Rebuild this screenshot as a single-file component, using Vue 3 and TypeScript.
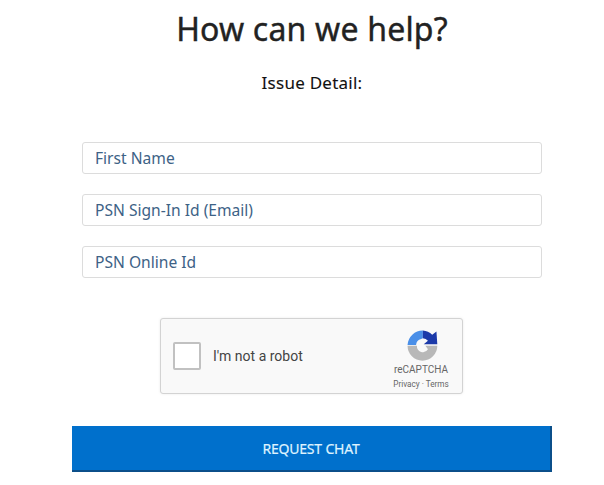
<script setup lang="ts">
const fields: string[] = ['First Name', 'PSN Sign-In Id (Email)', 'PSN Online Id']
</script>

<template>
  <main class="page">
    <h1 class="title">How can we help?</h1>
    <p class="subtitle">Issue Detail:</p>
    <form class="form" @submit.prevent>
      <div v-for="field in fields" :key="field" class="field">{{ field }}</div>
      <div class="captcha">
        <span class="check"></span>
        <span class="robot">I'm not a robot</span>
        <div class="brand">
          <svg class="logo" viewBox="0 0 40 40" width="34" height="34" aria-hidden="true">
            <path d="M21 3 A18 18 0 0 0 3 20 L13 20 A8 8 0 0 1 19 13 L21 12 Z" fill="#4a8fe8" />
            <path d="M21 3 A17 17 0 0 1 32 8 L37 4 L38 19 L22 19 L27 15 A8 8 0 0 0 21 12 Z" fill="#1c3aa9" />
            <path d="M3 21 L14 21 A7 7 0 0 0 27 25 L24 21 L38 21 A17.500 17.500 0 0 1 3 21 Z" fill="#b8b8b8" />
          </svg>
          <span class="re">reCAPTCHA</span>
          <span class="links">Privacy · Terms</span>
        </div>
      </div>
      <button class="submit" type="submit">REQUEST CHAT</button>
    </form>
  </main>
</template>

<style>
html, body { margin: 0; background: #fff; }
</style>

<style scoped>
.page {
  width: 604px;
  height: 485px;
  overflow: hidden;
  box-sizing: border-box;
  padding-top: 7px;
  font-family: "Noto Sans", "Open Sans", sans-serif;
  display: flex;
  flex-direction: column;
  align-items: center;
}
.title {
  margin: 0 0 0 20px;
  font-size: 32px;
  line-height: 44px;
  font-weight: 400;
  letter-spacing: 0.2px;
  color: #222;
  -webkit-text-stroke: 0.4px #222;
}
.subtitle {
  margin: 20px 0 0 20px;
  font-size: 17px;
  line-height: 24px;
  letter-spacing: 0.25px;
  color: #111;
  -webkit-text-stroke: 0.1px #111;
}
.form {
  margin-top: 47px;
  margin-left: 20px;
  width: 480px;
  display: flex;
  flex-direction: column;
  align-items: center;
}
.field {
  width: 460px;
  height: 32px;
  box-sizing: border-box;
  margin-bottom: 20px;
  padding: 0 12px;
  border: 1px solid #dcdcdc;
  border-radius: 3px;
  font-size: 15.6px;
  line-height: 30px;
  color: #3d6286;
}
.captcha {
  width: 303px;
  height: 76px;
  box-sizing: border-box;
  margin: 20px 1px 0 0;
  padding: 0 11px 0 12px;
  background: #f9f9f9;
  border: 1px solid #d3d3d3;
  border-radius: 3px;
  box-shadow: 0 0 3px rgba(0, 0, 0, 0.08);
  display: flex;
  align-items: center;
  font-family: Roboto, "Liberation Sans", sans-serif;
}
.check {
  width: 28px;
  height: 28px;
  box-sizing: border-box;
  background: #fff;
  border: 2px solid #c1c1c1;
  border-radius: 2px;
}
.robot {
  margin-left: 12px;
  font-size: 14px;
  color: #444;
}
.brand {
  margin-left: auto;
  width: 60px;
  display: flex;
  flex-direction: column;
  align-items: center;
  color: #666;
}
.logo { margin: 5px 0 0 2px; }
.re {
  margin-top: 2px;
  font-size: 10px;
  line-height: 12px;
}
.links {
  margin-top: 2px;
  font-size: 8.2px;
  line-height: 12px;
  white-space: nowrap;
}
.submit {
  width: 480px;
  height: 46px;
  margin-top: 32px;
  border: 0;
  border-right: 2px solid #0b4f8a;
  border-bottom: 2px solid #0b4f8a;
  background: #0070cc;
  color: #dff3ff;
  font-family: "Noto Sans", "Open Sans", sans-serif;
  font-size: 14px;
  letter-spacing: -0.2px;
  -webkit-text-stroke: 0.2px #dff3ff;
  padding: 0;
}
</style>
